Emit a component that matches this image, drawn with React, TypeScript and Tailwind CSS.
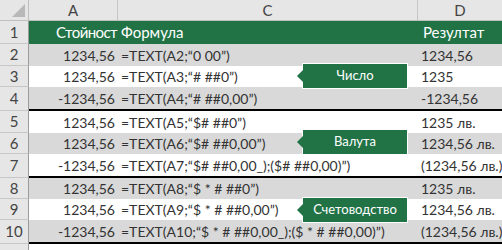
import React from "react";

const rows: { n: string; a: string; c: string; d: string; gray: boolean; h: string; thick?: boolean }[] = [
  { n: "2", a: "1234,56", c: "=TEXT(A2;“0 00”)", d: "1234,56", gray: true, h: "h-[22px]" },
  { n: "3", a: "1234,56", c: "=TEXT(A3;“# ##0”)", d: "1235", gray: false, h: "h-[21px]" },
  { n: "4", a: "-1234,56", c: "=TEXT(A4;“# ##0,00”)", d: "-1234,56", gray: true, h: "h-[24px]", thick: true },
  { n: "5", a: "1234,56", c: "=TEXT(A5;“$# ##0”)", d: "1235 лв.", gray: false, h: "h-[22px]" },
  { n: "6", a: "1234,56", c: "=TEXT(A6;“$# ##0,00”)", d: "1234,56 лв.", gray: true, h: "h-[21px]" },
  { n: "7", a: "-1234,56", c: "=TEXT(A7;“$# ##0,00_);($# ##0,00)”)", d: "(1234,56 лв.)", gray: false, h: "h-[24px]", thick: true },
  { n: "8", a: "1234,56", c: "=TEXT(A8;“$ * # ##0”)", d: "1235 лв.", gray: true, h: "h-[21px]" },
  { n: "9", a: "1234,56", c: "=TEXT(A9;“$ * # ##0,00”)", d: "1234,56 лв.", gray: false, h: "h-[21px]" },
  { n: "10", a: "-1234,56", c: "=TEXT(A10;“$ * # ##0,00_);($ * # ##0,00)”)", d: "(1234,56 лв.)", gray: true, h: "h-[24px]", thick: true },
];

function Callout({ text, top }: { text: string; top: string }) {
  return (
    <div className={`absolute left-[302px] ${top} w-[106px] h-[26px] bg-[#217346] border border-white flex items-center justify-center text-white text-[13px]`}>
      <div className="absolute left-[-6px] top-1/2 -translate-y-1/2 w-0 h-0 border-y-[6px] border-y-transparent border-r-[6px] border-r-[#217346]" />
      <span>{text}</span>
    </div>
  );
}

export default function App() {
  return (
    <div className="relative w-[502px] h-[250px] overflow-hidden bg-white text-[14px] text-[#333333]" style={{ fontFamily: "Lato, 'Open Sans', sans-serif" }}>
      {/* column header */}
      <div className="flex h-[21px] bg-[#e6e6e6] border-b border-[#bfbfbf] text-[#444] text-[15px]">
        <div className="relative w-[29px] shrink-0 border-r border-[#bfbfbf]">
          <div className="absolute right-[3px] bottom-[3px] w-0 h-0 border-l-[13px] border-l-transparent border-b-[13px] border-b-[#b8b8b8]" />
        </div>
        <div className="w-[89px] shrink-0 border-r border-[#c6c6c6] flex items-center justify-center">A</div>
        <div className="w-[300px] shrink-0 border-r border-[#c6c6c6] flex items-center justify-center">C</div>
        <div className="flex-1 flex items-center justify-center">D</div>
      </div>
      {/* row 1 */}
      <div className="flex h-[23px]">
        <div className="w-[29px] shrink-0 bg-[#e6e6e6] border-r border-[#9b9b9b] border-b border-b-[#c6c6c6] flex items-center justify-center text-[#444] text-[15px]">1</div>
        <div className="flex-1 flex flex-col">
          <div className="flex flex-1 bg-[#217346] text-white text-[15px] items-center">
            <div className="w-[89px] shrink-0 overflow-hidden whitespace-nowrap text-right pr-[1px] tracking-[-0.6px]">Стойност</div>
            <div className="w-[300px] shrink-0 pl-[3px] whitespace-nowrap">Формула</div>
            <div className="flex-1 pl-[5px] whitespace-nowrap">Резултат</div>
          </div>
          <div className="h-[2px] bg-black" />
        </div>
      </div>
      {rows.map((r) => (
        <div key={r.n} className={`flex ${r.h}`}>
          <div className="w-[29px] shrink-0 bg-[#e6e6e6] border-r border-[#9b9b9b] border-b border-b-[#c6c6c6] flex items-center justify-center text-[#444] text-[15px]">
            {r.n}
          </div>
          <div className="flex-1 flex flex-col">
            <div className={`flex flex-1 items-center whitespace-nowrap ${r.gray ? "bg-[#d9d9d9]" : "bg-white"}`}>
              <div className="w-[89px] shrink-0 text-right pr-[3px]">{r.a}</div>
              <div className="w-[300px] shrink-0 pl-[3px]">{r.c}</div>
              <div className="flex-1 pl-[3px]">{r.d}</div>
            </div>
            {r.thick && <div className="h-[2px] bg-black" />}
          </div>
        </div>
      ))}
      <div className="flex h-[10px]">
        <div className="w-[29px] shrink-0 bg-[#e6e6e6] border-r border-[#9b9b9b]" />
        <div className="flex-1 bg-white" />
      </div>
      <Callout text="Число" top="top-[63px]" />
      <Callout text="Валута" top="top-[129px]" />
      <Callout text="Счетоводство" top="top-[197px]" />
    </div>
  );
}
